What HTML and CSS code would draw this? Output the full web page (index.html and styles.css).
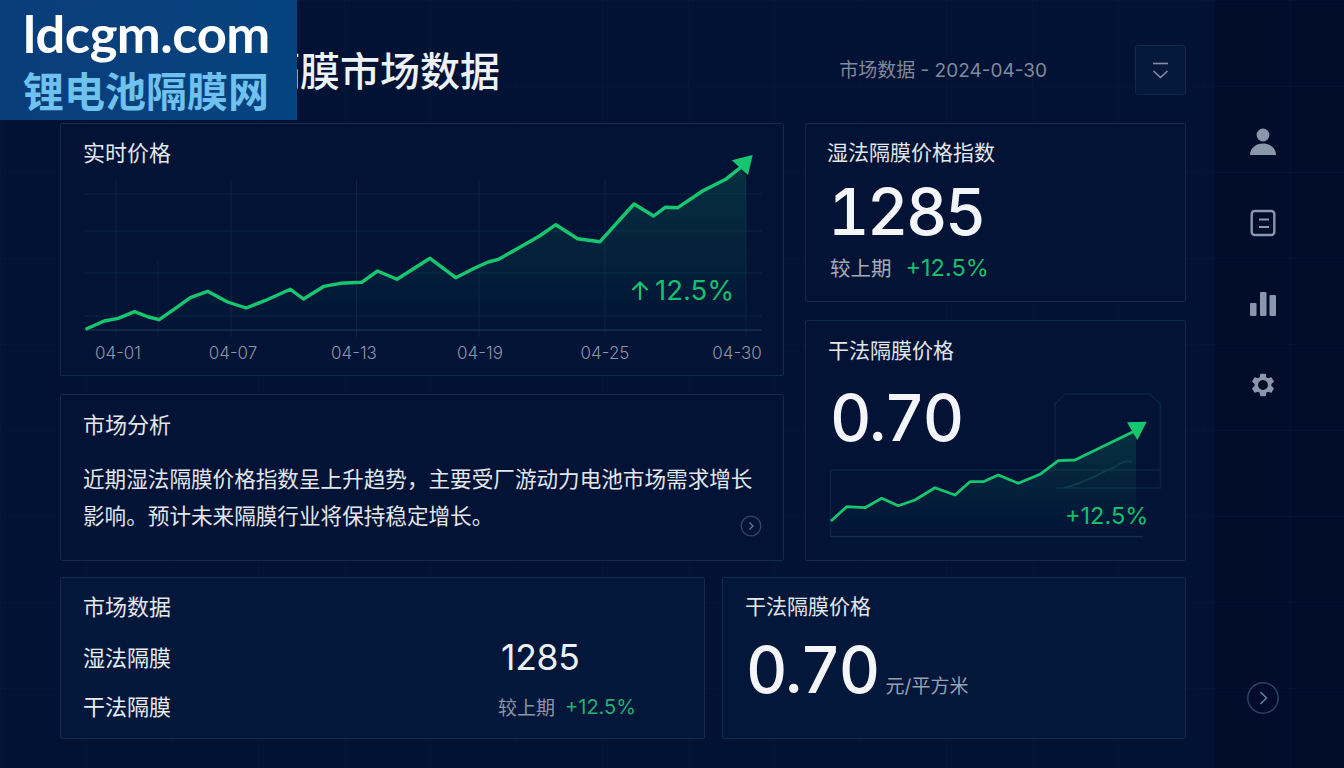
FILE: index.html
```html
<!DOCTYPE html>
<html lang="zh-CN">
<head>
<meta charset="utf-8">
<meta name="viewport" content="width=device-width, initial-scale=1.0">
<link rel="stylesheet" href="styles.css">
<title>隔膜市场数据</title>
</head>
<body>
  <!-- watermark sits over the page title -->
  <div class="logo">
    <div class="logo-en">ldcgm.com</div>
    <div class="logo-cn">锂电池隔膜网</div>
  </div>

  <div class="page">
    <main class="main">
      <header class="header">
        <h1 class="page-title">隔膜市场数据</h1>
        <span class="date">市场数据 - 2024-04-30</span>
        <button class="drop-btn" type="button" aria-label="展开">
          <svg width="17" height="17" viewBox="0 0 17 17" fill="none" stroke="#8590a5" stroke-width="1.6">
            <path d="M1 1.5H16"/>
            <path d="M1.5 9L8.5 15.5L15.5 9"/>
          </svg>
        </button>
      </header>

      <div class="top-grid">
        <div class="col">
          <section class="card price-card">
            <h2 class="card-title">实时价格</h2>
            <svg class="chart" width="724" height="210" viewBox="60 165 724 210">
              <defs>
                <linearGradient id="areaA" x1="0" y1="0" x2="0" y2="1">
                  <stop offset="0" stop-color="#17c472" stop-opacity=".17"/>
                  <stop offset="1" stop-color="#17c472" stop-opacity="0"/>
                </linearGradient>
                <linearGradient id="areaB" x1="0" y1="0" x2="0" y2="1">
                  <stop offset="0" stop-color="#17c472" stop-opacity=".17"/>
                  <stop offset="1" stop-color="#17c472" stop-opacity="0"/>
                </linearGradient>
              </defs>
              <g class="grid-lines">
                <path d="M84 193H762M84 230H762M84 272H762M84 315H762"/>
                <path d="M116 178V336M158 260V336M231 178V336M356.500 178V336M479 178V336M605 178V336M746 178V336"/>
              </g>
              <path class="axis" d="M84 329H762"/>
              <path fill="url(#areaA)" d="M85.600 328.300L104.200 320L118.200 317.300L134.500 310.700L148.500 316L159.200 318.700L174 308.300L190.400 296.700L207.600 290.300L227.600 301L246.200 307L264.800 299.700L290.400 288.300L303.500 298L324 285.300L340.300 282.300L361.700 281.300L377.500 270L397 278.300L430 257.300L455.700 276.700L474.300 267.300L488.300 261L498.600 258.300L539.500 235L555.800 223.700L577.700 237.700L600 240.700L634 203L653.600 215L665.200 206.300L677.800 206.700L702.500 190L725.700 178.300L746 163V329H85.600Z"/>
              <path class="line" stroke-width="3.400" d="M85.600 328.300L104.200 320L118.200 317.300L134.500 310.700L148.500 316L159.200 318.700L174 308.300L190.400 296.700L207.600 290.300L227.600 301L246.200 307L264.800 299.700L290.400 288.300L303.500 298L324 285.300L340.300 282.300L361.700 281.300L377.500 270L397 278.300L430 257.300L455.700 276.700L474.300 267.300L488.300 261L498.600 258.300L539.500 235L555.800 223.700L577.700 237.700L600 240.700L634 203L653.600 215L665.200 206.300L677.800 206.700L702.500 190L725.700 178.300L744.400 163.300"/>
              <path class="arrow" d="M752.700 154L731.800 159.300L748 174Z"/>
              <path class="up-arrow" d="M640 299V282M632.500 289L640 281.500L647.500 289"/>
              <text class="chart-pct" x="655" y="299">12.5%</text>
              <g class="tick">
                <text x="118" y="357.500">04-01</text>
                <text x="233" y="357.500">04-07</text>
                <text x="354" y="357.500">04-13</text>
                <text x="480" y="357.500">04-19</text>
                <text x="605" y="357.500">04-25</text>
                <text x="737" y="357.500">04-30</text>
              </g>
            </svg>
          </section>

          <section class="card analysis-card">
            <h2 class="card-title">市场分析</h2>
            <p class="analysis-text">近期湿法隔膜价格指数呈上升趋势，主要受厂游动力电池市场需求增长影响。预计未来隔膜行业将保持稳定增长。</p>
            <svg class="more-small" width="22" height="22" viewBox="0 0 22 22" fill="none">
              <circle cx="11" cy="11" r="9.800" stroke="#2f4a66" stroke-width="1.300"/>
              <path d="M9.500 7.500L13 11L9.500 14.500" stroke="#66798f" stroke-width="1.300"/>
            </svg>
          </section>
        </div>

        <div class="col">
          <section class="card index-card">
            <h2 class="card-title narrow">湿法隔膜价格指数</h2>
            <div class="big-num">1285</div>
            <div class="compare">
              <span class="compare-label">较上期</span>
              <span class="green">+12.5%</span>
            </div>
          </section>

          <section class="card dry-card">
            <h2 class="card-title narrow">干法隔膜价格</h2>
            <div class="big-num">0.70</div>
            <svg class="mini-chart" width="381" height="124" viewBox="805 440 381 124">
              <path class="mini-frame" d="M830.500 536.500V470H1160M1055 470V404L1065 394H1150L1160.500 404V488H1055"/>
              <path class="axis" d="M830.500 536.500H1143"/>
              <path fill="url(#areaB)" d="M831 521L846.700 506.700L865 507.700L881.700 498.300L898.300 505.700L915 500L935 487.700L955 495L970 481.700L983.300 481.700L998.300 475L1018.300 483.300L1040 474.300L1058.300 460.700L1075 460L1136 431V536H831Z"/>
              <path class="faint-line" d="M1063 488C1085 484 1105 470 1115 467C1122 462 1126 460 1132 462"/>
              <path class="line" stroke-width="2.800" d="M831 521L846.700 506.700L865 507.700L881.700 498.300L898.300 505.700L915 500L935 487.700L955 495L970 481.700L983.300 481.700L998.300 475L1018.300 483.300L1040 474.300L1058.300 460.700L1075 460L1136.700 430"/>
              <path class="arrow" d="M1146.700 421.700L1127 422.300L1137.300 440Z"/>
              <text class="mini-pct" x="1065" y="524">+12.5%</text>
            </svg>
          </section>
        </div>
      </div>

      <div class="bottom-grid">
        <section class="card data-card">
          <h2 class="card-title">市场数据</h2>
          <div class="data-rows">
            <span class="row-label">湿法隔膜</span>
            <span class="row-num">1285</span>
            <span class="row-label">干法隔膜</span>
            <span class="row-sub">
              <span class="row-sub-label">较上期</span>
              <span class="green-dim">+12.5%</span>
            </span>
          </div>
        </section>

        <section class="card unit-card">
          <h2 class="card-title narrow">干法隔膜价格</h2>
          <div class="unit-line">
            <span class="big-num">0.70</span>
            <span class="unit">元/平方米</span>
          </div>
        </section>
      </div>
    </main>

    <aside class="side">
      <svg class="side-icon" viewBox="0 0 28 28" fill="#8a97ab">
        <circle cx="14" cy="7" r="6.400"/>
        <path d="M1 27C1 20 7 15.500 14 15.500S27 20 27 27Z"/>
      </svg>
      <svg class="side-icon" viewBox="0 0 28 28" fill="none" stroke="#8a97ab" stroke-width="2.400">
        <rect x="2.700" y="2" width="22.600" height="24" rx="3"/>
        <path d="M10 10.500H20M10 18H20" stroke-width="2.200"/>
      </svg>
      <svg class="side-icon" viewBox="0 0 28 28" fill="#8a97ab">
        <rect x="1" y="13" width="6.500" height="13" rx="1.200"/>
        <rect x="11" y="2" width="6.500" height="24" rx="1.200"/>
        <rect x="20.500" y="5" width="6.500" height="21" rx="1.200"/>
      </svg>
      <svg class="side-icon" viewBox="0 0 24 24" fill="#8a97ab">
        <path d="M19.140 12.940c.04-.3.06-.61.06-.94 0-.32-.02-.64-.07-.94l2.030-1.580a.49.49 0 0 0 .12-.61l-1.920-3.320a.488.488 0 0 0-.59-.22l-2.390.96c-.5-.38-1.030-.7-1.620-.94l-.36-2.540a.484.484 0 0 0-.48-.41h-3.840c-.24 0-.43.17-.47.41l-.36 2.540c-.59.24-1.130.57-1.620.94l-2.390-.96c-.22-.08-.47 0-.59.22L2.740 8.870c-.12.21-.08.47.12.61l2.030 1.580c-.05.3-.09.63-.09.94s.02.64.07.94l-2.030 1.580a.49.49 0 0 0-.12.61l1.920 3.320c.12.22.37.29.59.22l2.390-.96c.5.38 1.030.7 1.620.94l.36 2.540c.05.24.24.41.48.41h3.840c.24 0 .44-.17.47-.41l.36-2.540c.59-.24 1.130-.56 1.620-.94l2.390.96c.22.08.47 0 .59-.22l1.920-3.320c.12-.22.07-.47-.12-.61l-2.010-1.580zM12 16.200c-2.310 0-4.200-1.890-4.200-4.200s1.890-4.200 4.200-4.200 4.200 1.890 4.200 4.200-1.890 4.200-4.200 4.200z"/>
      </svg>
      <svg class="side-more" width="32" height="32" viewBox="0 0 32 32" fill="none">
        <circle cx="16" cy="16" r="15.200" stroke="#2b4763" stroke-width="1.400"/>
        <path d="M13.500 10L19.500 16L13.500 22" stroke="#6a7f96" stroke-width="1.500"/>
      </svg>
    </aside>
  </div>
</body>
</html>
```

FILE: styles.css
```css
* {
  box-sizing: border-box;
}
body {
  margin: 0;
  background: #010c2a;
  color: #e8ebf0;
  font-family: Inter, "Noto Sans CJK SC", sans-serif;
}
h1, h2, p {
  margin: 0;
  font-weight: 400;
}

/* watermark */
.logo {
  position: absolute;
  left: 0;
  top: 0;
  z-index: 2;
  width: 297px;
  height: 120px;
  padding: 2px 0 0 23px;
  background: linear-gradient(100deg, #0a3d7a, #06447f);
}
.logo-en {
  color: #fff;
  font-family: Lato, sans-serif;
  font-size: 52.500px;
  font-weight: 700;
  line-height: 62px;
  letter-spacing: -.5px;
}
.logo-cn {
  color: #6fc1ee;
  font-family: "Noto Sans CJK SC", sans-serif;
  font-size: 41px;
  font-weight: 700;
  line-height: 50px;
}

/* page frame */
.page {
  display: flex;
  width: 1344px;
  height: 768px;
  overflow: hidden;
  background-image:
    linear-gradient(rgba(60, 120, 160, .05) 1px, transparent 1px),
    linear-gradient(90deg, rgba(60, 120, 160, .05) 1px, transparent 1px);
  background-size: 86px 86px;
}
.main {
  width: 1215px;
  padding: 0 29px 0 60px;
  background: rgba(5, 28, 66, .42);
}
.side {
  display: flex;
  flex-direction: column;
  flex: 1;
  gap: 53px;
  padding: 128px 0 54px 34px;
}
.side-icon {
  display: block;
  width: 28px;
  height: 28px;
}
.side-more {
  display: block;
  margin: auto 0 0 -2px;
}

/* header */
.header {
  display: flex;
  align-items: center;
  height: 123px;
  padding: 45px 0 28px;
}
.page-title {
  margin: 4px 0 0 200px;
  color: #eef1f5;
  font-size: 40px;
  font-weight: 500;
  line-height: 50px;
  white-space: nowrap;
}
.date {
  margin: 0 0 4px auto;
  color: #7f8a9f;
  font-size: 19px;
  white-space: nowrap;
}
.drop-btn {
  display: flex;
  align-items: center;
  justify-content: center;
  width: 51px;
  height: 50px;
  margin-left: 88px;
  padding: 0;
  background: rgba(8, 32, 68, .5);
  border: 1px solid #10294a;
  border-radius: 3px;
}

/* cards */
.top-grid {
  display: grid;
  grid-template-columns: 724px 381px;
  column-gap: 21px;
}
.col {
  display: flex;
  flex-direction: column;
  gap: 18px;
}
.card {
  position: relative;
  padding: 16px 22px 0;
  background: #021336;
  border: 1px solid #0e2b4e;
  border-radius: 2px;
}
.card-title {
  color: #e3e6ea;
  font-size: 22px;
  line-height: 26px;
}
.card-title.narrow {
  font-size: 21px;
}
.price-card {
  height: 253px;
}
.chart {
  display: block;
  overflow: visible;
  margin-left: -23px;
}
.grid-lines path {
  fill: none;
  stroke: #0b2340;
  stroke-width: 1;
}
.axis {
  fill: none;
  stroke: #15304f;
  stroke-width: 1.500;
}
.line {
  fill: none;
  stroke: #16c76f;
  stroke-linejoin: round;
}
.arrow {
  fill: #16c76f;
}
.up-arrow {
  fill: none;
  stroke: #16c76f;
  stroke-width: 2.200;
}
.chart-pct {
  fill: #16bf6e;
  font-size: 27.500px;
}
.tick text {
  fill: #8d95a8;
  font-size: 17px;
  font-weight: 300;
  text-anchor: middle;
}

.analysis-card {
  height: 167px;
  padding-top: 17px;
}
.analysis-text {
  width: 680px;
  margin-top: 23px;
  color: #e3e6ea;
  font-size: 21.600px;
  line-height: 37px;
}
.more-small {
  position: absolute;
  right: 21px;
  bottom: 23px;
}

.index-card {
  height: 179px;
  padding-left: 21px;
}
.big-num {
  color: #f4f5f8;
  font-size: 64px;
  font-weight: 500;
  line-height: 76px;
  letter-spacing: -2.500px;
  font-variant-numeric: tabular-nums;
}
.index-card .big-num {
  margin: 8px 0 0 1px;
}
.dry-card .big-num {
  margin: 16px 0 0 2px;
}
.compare {
  display: flex;
  align-items: center;
  gap: 14px;
  margin: 2px 0 0 3px;
}
.compare-label {
  color: #a4abb8;
  font-size: 20.500px;
}
.green {
  color: #16bf6e;
  font-size: 23.500px;
}
.dry-card {
  height: 241px;
  padding: 17px 0 0 22px;
}
.mini-chart {
  display: block;
  overflow: visible;
  margin: -16px 0 0 -23px;
}
.mini-frame {
  fill: none;
  stroke: #0c2544;
  stroke-width: 1.500;
}
.faint-line {
  fill: none;
  stroke: #10404c;
  stroke-width: 1.500;
}
.mini-pct {
  fill: #16bf6e;
  font-size: 23.500px;
}

/* bottom row */
.bottom-grid {
  display: grid;
  grid-template-columns: 645px 464px;
  column-gap: 17px;
  margin-top: 16px;
}
.bottom-grid .card {
  height: 162px;
  background: #03173a;
}
.data-rows {
  display: grid;
  grid-template-columns: 417px auto;
  grid-auto-rows: 49px;
  align-items: center;
  margin-top: 13px;
}
.row-label {
  padding-bottom: 4px;
  font-size: 22px;
}
.row-num {
  margin-left: 1px;
  color: #eef0f4;
  font-size: 35.500px;
  letter-spacing: -.3px;
}
.row-sub {
  display: flex;
  align-items: center;
  gap: 10px;
  margin-left: -2px;
}
.row-sub-label {
  color: #8d95a4;
  font-size: 19px;
}
.green-dim {
  color: #25ae72;
  font-size: 20px;
}
.unit-line {
  display: flex;
  align-items: baseline;
  gap: 8px;
  margin: 12px 0 0 1px;
}
.unit {
  color: #98a1b0;
  font-size: 19px;
}
```
